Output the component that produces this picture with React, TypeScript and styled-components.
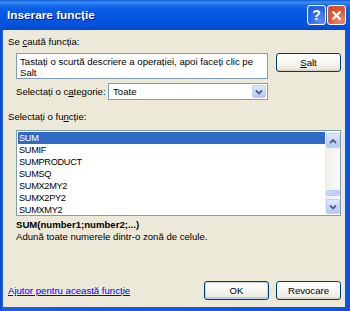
import React from "react";
import styled, { createGlobalStyle } from "styled-components";

const Global = createGlobalStyle`
  html, body { margin: 0; padding: 0; background: #fff; }
  body { font-family: "Liberation Sans", Arial, sans-serif; }
  * { box-sizing: border-box; }
`;

const Window = styled.div`
  width: 350px;
  height: 311px;
  display: flex;
  flex-direction: column;
  background: linear-gradient(to right, #0841c8 0px, #1a5fe0 2px, #0a54e0 100%);
  font-family: "Liberation Sans", Arial, sans-serif;
  font-size: 9.6px;
  color: #000;
  overflow: hidden;
`;

const TitleBar = styled.div`
  height: 30px;
  flex: none;
  display: flex;
  align-items: center;
  padding: 0 4px 0 7px;
  background: linear-gradient(
    to bottom,
    #0b58d4 0%,
    #3c8ef5 7%,
    #1e6fec 16%,
    #0a5de6 30%,
    #0556e4 60%,
    #0452dc 85%,
    #0447c6 100%
  );
`;

const Title = styled.div`
  flex: 1;
  color: #fff;
  font-weight: bold;
  font-size: 11.8px;
  text-shadow: 1px 1px 0 #0a1e8c;
`;

const TitleButtons = styled.div`
  display: flex;
  gap: 1px;
`;

const CapButton = styled.div<{ $kind: "help" | "close" }>`
  width: 19px;
  height: 20px;
  border: 1px solid #fff;
  border-radius: 3px;
  display: flex;
  align-items: center;
  justify-content: center;
  color: #fff;
  font-weight: bold;
  font-size: 14px;
  font-family: "Liberation Sans", Arial, sans-serif;
  background: ${(p) =>
    p.$kind === "help"
      ? "radial-gradient(circle at 70% 80%, #5a8ff6 0%, #2a64e8 55%, #2459d8 100%)"
      : "radial-gradient(circle at 70% 80%, #f08a6a 0%, #e0552e 55%, #d2461f 100%)"};
  box-shadow: inset 0 0 1px rgba(255, 255, 255, 0.6);
`;

const Client = styled.div`
  flex: 1;
  margin: 0 5px 4px 3px;
  background: #ece9d8;
  display: flex;
  flex-direction: column;
  padding: 6px 4px 7px 5px;
`;

const Label = styled.div`
  line-height: 12px;
  height: 12px;
  white-space: nowrap;
`;

const U = styled.span`
  text-decoration: underline;
`;

const SearchRow = styled.div`
  display: flex;
  align-items: flex-start;
  gap: 8px;
  margin: 5px 0 0 8px;
`;

const SearchBox = styled.div`
  width: 252px;
  height: 26px;
  background: #fff;
  border: 1px solid #7f9db9;
  padding: 2px 3px;
  line-height: 11px;
`;

const Button = styled.div<{ $w: number; $default?: boolean }>`
  width: ${(p) => p.$w}px;
  height: 19px;
  border: 1px solid #003c74;
  border-radius: 3px;
  background: linear-gradient(to bottom, #ffffff 0%, #f6f6f2 50%, #ecebe4 85%, #d6d0c5 100%);
  display: flex;
  align-items: center;
  justify-content: center;
  box-shadow: ${(p) =>
    p.$default
      ? "inset 0 0 0 1px #c5d7f5, inset 0 -1px 0 1px #aec6f0"
      : "inset 0 -1px 0 0 #d6d0c5"};
`;

const CategoryRow = styled.div`
  display: flex;
  align-items: center;
  margin: 4px 0 0 8px;
`;

const CategoryLabel = styled.div`
  width: 92px;
  white-space: nowrap;
`;

const Combo = styled.div`
  width: 160px;
  height: 17px;
  background: #fff;
  border: 1px solid #7f9db9;
  display: flex;
  align-items: center;
  padding: 1px;
`;

const ComboText = styled.div`
  flex: 1;
  padding-left: 3px;
`;

const ArrowBtn = styled.div<{ $h?: number }>`
  width: 14px;
  height: ${(p) => p.$h ?? 13}px;
  flex: none;
  border-radius: 2px;
  border: 1px solid #bccff6;
  background: linear-gradient(to bottom, #e2eafe 0%, #c8d7fb 50%, #b4c7f6 100%);
  display: flex;
  align-items: center;
  justify-content: center;
`;

const FuncLabel = styled(Label)`
  margin-top: 11px;
`;

const ListBox = styled.div`
  margin: 7px 0 0 8px;
  width: 325px;
  height: 86px;
  background: #fff;
  border: 1px solid #7f9db9;
  display: flex;
  padding: 1px 0 1px 1px;
  overflow: hidden;
`;

const Items = styled.div`
  flex: 1;
  display: flex;
  flex-direction: column;
  overflow: hidden;
`;

const Item = styled.div<{ $sel?: boolean }>`
  height: 12px;
  flex: none;
  line-height: 12px;
  padding-left: 1px;
  font-size: 9.2px;
  letter-spacing: -0.3px;
  background: ${(p) => (p.$sel ? "#316ac5" : "transparent")};
  color: ${(p) => (p.$sel ? "#fff" : "#000")};
`;

const ScrollBar = styled.div`
  width: 15px;
  flex: none;
  display: flex;
  flex-direction: column;
  align-items: center;
  background: linear-gradient(to right, #eeede5, #fbfbf8);
  padding-top: 1px;
`;

const Track = styled.div`
  flex: 1;
  width: 100%;
  display: flex;
  flex-direction: column;
  justify-content: flex-end;
  align-items: center;
  padding-bottom: 3px;
`;

const Thumb = styled.div`
  width: 14px;
  height: 6px;
  border-radius: 2px;
  border: 1px solid #b7c9f2;
  background: linear-gradient(to right, #c9d8fc, #b9cdfa);
`;

const Signature = styled.div`
  margin: 3px 0 0 8px;
  font-weight: bold;
  line-height: 12px;
`;

const Description = styled.div`
  margin-left: 8px;
  line-height: 12px;
`;

const BottomRow = styled.div`
  margin-top: auto;
  display: flex;
  align-items: center;
  gap: 7px;
`;

const HelpLink = styled.a`
  flex: 1;
  color: #0000ff;
  text-decoration: underline;
  cursor: pointer;
`;

const Chevron = ({ up }: { up?: boolean }) => (
  <svg width="8" height="6" viewBox="0 0 8 6">
    <path
      d={up ? "M1 5 L4 2 L7 5" : "M1 1.5 L4 4.5 L7 1.5"}
      fill="none"
      stroke="#4d6185"
      strokeWidth="1.8"
    />
  </svg>
);

const items = ["SUM", "SUMIF", "SUMPRODUCT", "SUMSQ", "SUMX2MY2", "SUMX2PY2", "SUMXMY2"];

export default function App() {
  return (
    <>
      <Global />
      <Window>
        <TitleBar>
          <Title>Inserare funcție</Title>
          <TitleButtons>
            <CapButton $kind="help">?</CapButton>
            <CapButton $kind="close">
              <svg width="11" height="11" viewBox="0 0 11 11">
                <path d="M1.5 1.5 L9.5 9.5 M9.5 1.5 L1.5 9.5" stroke="#fff" strokeWidth="2" />
              </svg>
            </CapButton>
          </TitleButtons>
        </TitleBar>
        <Client>
          <Label>
            Se <U>c</U>aută funcția:
          </Label>
          <SearchRow>
            <SearchBox>
              Tastați o scurtă descriere a operației, apoi faceți clic pe Salt
            </SearchBox>
            <Button $w={65}>
              <U>S</U>alt
            </Button>
          </SearchRow>
          <CategoryRow>
            <CategoryLabel>
              Selectați o c<U>a</U>tegorie:
            </CategoryLabel>
            <Combo>
              <ComboText>Toate</ComboText>
              <ArrowBtn>
                <Chevron />
              </ArrowBtn>
            </Combo>
          </CategoryRow>
          <FuncLabel>
            Selectați o fu<U>n</U>cție:
          </FuncLabel>
          <ListBox>
            <Items>
              {items.map((it, i) => (
                <Item key={it} $sel={i === 0}>
                  {it}
                </Item>
              ))}
            </Items>
            <ScrollBar>
              <ArrowBtn $h={15}>
                <Chevron up />
              </ArrowBtn>
              <Track>
                <Thumb />
              </Track>
              <ArrowBtn $h={15}>
                <Chevron />
              </ArrowBtn>
            </ScrollBar>
          </ListBox>
          <Signature>SUM(number1;number2;...)</Signature>
          <Description>Adună toate numerele dintr-o zonă de celule.</Description>
          <BottomRow>
            <HelpLink>Ajutor pentru această funcție</HelpLink>
            <Button $w={65} $default>
              OK
            </Button>
            <Button $w={65}>Revocare</Button>
          </BottomRow>
        </Client>
      </Window>
    </>
  );
}
